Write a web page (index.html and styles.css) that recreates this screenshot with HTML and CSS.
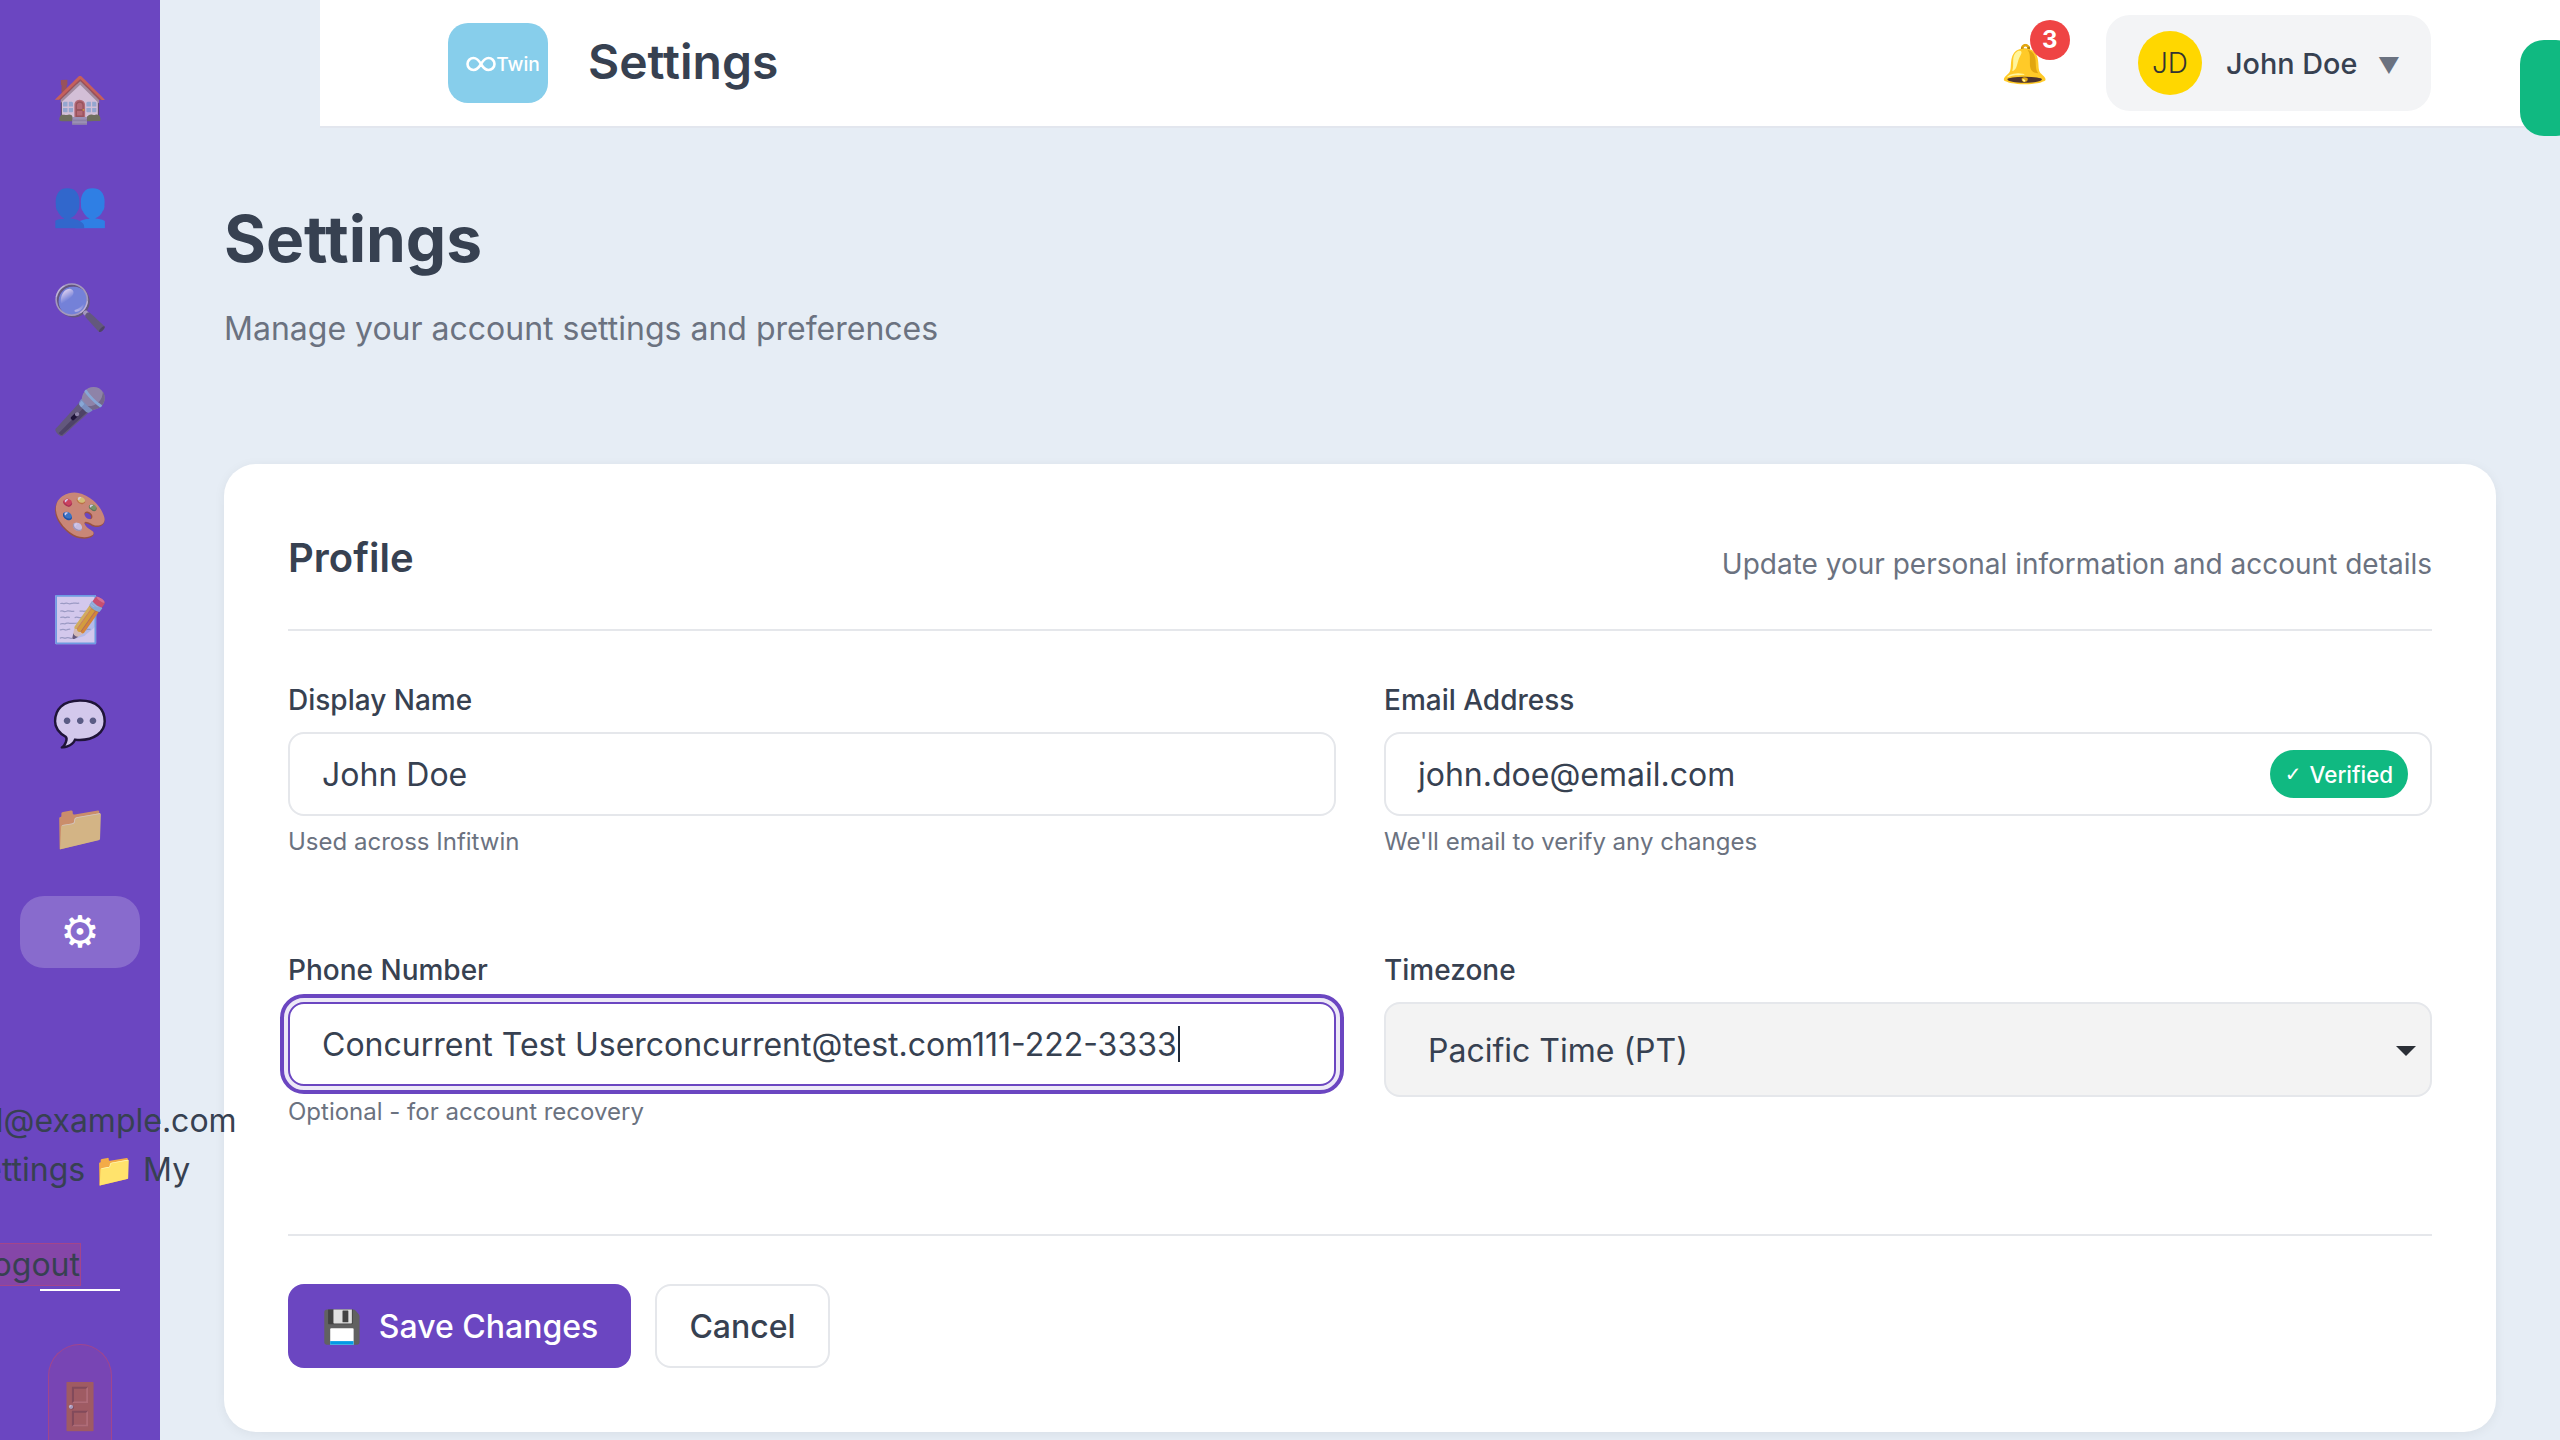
FILE: index.html
```html
<!DOCTYPE html>
<html lang="en">
<head>
<meta charset="utf-8">
<title>Settings</title>
<link rel="stylesheet" href="styles.css">
</head>
<body>
<div class="app">
  <aside class="sidebar">
    <nav class="nav">
      <a class="nav-item"><span class="nav-glyph">🏠</span></a>
      <a class="nav-item"><span class="nav-glyph">👥</span></a>
      <a class="nav-item"><span class="nav-glyph">🔍</span></a>
      <a class="nav-item"><span class="nav-glyph">🎤</span></a>
      <a class="nav-item"><span class="nav-glyph">🎨</span></a>
      <a class="nav-item"><span class="nav-glyph">📝</span></a>
      <a class="nav-item"><span class="nav-glyph">💬</span></a>
      <a class="nav-item"><span class="nav-glyph">📁</span></a>
      <a class="nav-item active"><span class="gear">⚙&#xFE0E;</span></a>
    </nav>
    <div class="stray">
      <div class="stray-line">email@example.com</div>
      <div class="stray-line stray-shift">⚙️ Settings 📁 My</div>
    </div>
    <div class="logout-row"><span class="logout-text">Logout</span></div>
    <div class="rule"></div>
    <div class="door"><span class="door-icon">🚪</span></div>
  </aside>
  <div class="column">
    <header class="topbar">
      <div class="logo">
        <svg class="inf" viewBox="0 0 30 16" width="30" height="16" aria-hidden="true"><path d="M15 8C12.5 3.8 10.5 2 7.5 2a6 6 0 0 0 0 12c3 0 5-1.800 7.500-6s4.500-6 7.500-6a6 6 0 0 1 0 12c-3 0-5-1.800-7.500-6z" fill="none" stroke="#fff" stroke-width="2.600"/></svg>
        <span class="logo-text">Twin</span>
      </div>
      <div class="top-title">Settings</div>
      <div class="top-right">
        <div class="bell"><span class="bell-glyph">🔔</span><span class="badge">3</span></div>
        <div class="user">
          <span class="avatar">JD</span>
          <span class="user-name">John Doe</span>
          <span class="caret">▼</span>
        </div>
      </div>
    </header>
    <main class="content">
      <h1 class="page-title">Settings</h1>
      <p class="page-sub">Manage your account settings and preferences</p>
      <section class="card">
        <div class="card-head">
          <h2 class="card-title">Profile</h2>
          <span class="card-note">Update your personal information and account details</span>
        </div>
        <div class="form-grid">
          <div class="field">
            <div class="label">Display Name</div>
            <div class="input">John Doe</div>
            <div class="help">Used across Infitwin</div>
          </div>
          <div class="field">
            <div class="label">Email Address</div>
            <div class="input input-email">john.doe@email.com<span class="verified"><span class="check">✓</span>Verified</span></div>
            <div class="help">We'll email to verify any changes</div>
          </div>
          <div class="field">
            <div class="label">Phone Number</div>
            <div class="input input-focus">Concurrent Test Userconcurrent@test.com111-222-3333<span class="text-caret"></span></div>
            <div class="help">Optional - for account recovery</div>
          </div>
          <div class="field">
            <div class="label">Timezone</div>
            <div class="select">Pacific Time (PT)<span class="select-arrow"></span></div>
          </div>
        </div>
        <div class="actions">
          <button class="btn btn-primary"><span class="btn-icon">💾</span>Save Changes</button>
          <button class="btn btn-ghost">Cancel</button>
        </div>
      </section>
    </main>
  </div>
</div>
<div class="toast-edge"></div>
</body>
</html>
```
FILE: styles.css
```css
* { box-sizing: border-box; }
html, body { margin: 0; height: 100%; }
body {
  width: 2560px; height: 1440px; overflow: hidden;
  background: #e6edf5; color: #374151;
  font-family: Inter, "Noto Color Emoji", "Noto Sans", sans-serif;
}
.app { display: flex; height: 1440px; }
.sidebar {
  width: 160px; flex: none; height: 1440px; background: #6b46c1;
  padding-top: 64px; position: relative; z-index: 5;
  display: flex; flex-direction: column; align-items: stretch;
}
.sidebar > * { flex: none; }
.nav { display: flex; flex-direction: column; gap: 32px; padding: 0 20px; }
.nav-item {
  height: 72px; display: flex; align-items: center; justify-content: center;
  font-size: 45px; line-height: 1; border-radius: 24px;
}
.nav-glyph { opacity: .7; padding-bottom: 3px; }
.nav-item.active { background: rgba(255,255,255,.2); }
.gear { color: #fff; font-size: 44px; font-family: "DejaVu Sans", sans-serif; }
.stray { margin-top: 128px; }
.stray-line {
  height: 49px; line-height: 49px; font-size: 32px; white-space: nowrap;
  display: flex; justify-content: center; color: #374151;
}
.stray-shift { padding-right: 56px; }
.logout-row { display: flex; justify-content: flex-end; width: 81px; margin-top: 49px; height: 43px; }
.logout-text {
  flex: none; font-size: 32px; line-height: 41px;
  background: rgba(239,68,68,.2); border: 1px solid rgba(239,68,68,.3);
}
.rule { width: 80px; height: 2px; background: #fff; margin: 3px 0 0 40px; }
.door {
  width: 64px; height: 100px; margin: 53px 0 0 48px;
  border: 1px solid rgba(239,68,68,.35); border-radius: 32px 32px 0 0;
  background: rgba(239,68,68,.1); display: flex; justify-content: center;
  padding-top: 38px; font-size: 45px; line-height: 1;
}
.door-icon { opacity: .7; }
.column { flex: 1; min-width: 0; display: flex; flex-direction: column; }
.topbar {
  height: 128px; margin-left: 160px; flex: none; background: #fff;
  border-bottom: 2px solid #e2e6ee; display: flex; align-items: center;
  padding: 0 129px 0 128px;
}
.logo {
  width: 100px; height: 80px; background: #87ceeb; border-radius: 20px; padding: 2px 0 0 10px;
  display: flex; align-items: center; justify-content: center; flex: none;
}
.inf { flex: none; }
.logo-text { color: #fff; font-size: 19.2px; font-weight: 500; }
.top-title { margin-left: 40px; font-size: 48px; font-weight: 600; color: #374151; padding-bottom: 4px; }
.top-right { margin-left: auto; display: flex; align-items: center; gap: 57px; }
.bell { position: relative; font-size: 38px; line-height: 1; }
.badge {
  position: absolute; left: 28px; top: -24px; width: 40px; height: 40px;
  border-radius: 50%; background: #ef4444; color: #fff; font-size: 24px;
  font-weight: 700; display: flex; align-items: center; justify-content: center;
}
.user {
  display: flex; align-items: center; height: 96px; width: 325px;
  padding: 0 31px 0 32px; background: #f3f4f6; border-radius: 24px;
}
.avatar {
  width: 64px; height: 64px; border-radius: 50%; background: #ffd700;
  color: #333; font-size: 28px; font-weight: 300; display: flex; align-items: center;
  justify-content: center; flex: none;
}
.user-name { margin-left: 24px; font-size: 28.8px; font-weight: 500; color: #374151; }
.caret { margin-left: auto; font-size: 22px; color: #6b7280; padding-top: 4px; }
.content { padding: 0 64px; }
.page-title { margin: 71px 0 0; font-size: 64px; line-height: 80px; font-weight: 700; color: #374151; }
.page-sub { margin: 26px 0 0; font-size: 32px; line-height: 48px; color: #6b7280; }
.card {
  margin-top: 111px; height: 968px; background: #fff; border-radius: 32px;
  padding: 64px; box-shadow: 0 2px 12px rgba(0,0,0,.06);
}
.card-head {
  display: flex; justify-content: space-between; align-items: flex-end;
  padding-bottom: 47px; height: 103px; border-bottom: 2px solid #e5e7eb;
}
.card-title { margin: 0; font-size: 40px; line-height: 48px; font-weight: 600; color: #374151; }
.card-note { font-size: 28px; line-height: 40px; color: #6b7280; margin-bottom: -2px; }
.form-grid { display: grid; grid-template-columns: 1fr 1fr; column-gap: 48px; margin-top: 49px; grid-auto-rows: 270px; }
.label { font-size: 28px; line-height: 40px; font-weight: 500; color: #374151; height: 52px; }
.input {
  height: 84px; border: 2px solid #e5e7eb; border-radius: 16px; background: #fff;
  padding: 0 32px; font-size: 32px; display: flex; align-items: center; color: #374151;
}
.input-email { position: relative; }
.verified {
  position: absolute; right: 22px; top: 16px; height: 48px; width: 138px;
  background: #10b981; color: #fff; border-radius: 24px; font-size: 22.4px;
  font-weight: 500; display: flex; align-items: center; justify-content: center;
}
.check { font-family: "DejaVu Sans", sans-serif; margin-right: 8px; font-size: 20px; }
.input-focus {
  border-color: #6b46c1; box-shadow: 0 0 0 4px #ede9f7;
  outline: 4px solid #6b46c1; outline-offset: 4px;
}
.text-caret { width: 2px; height: 36px; background: #1f2937; margin-left: 1px; }
.help { margin-top: 10px; font-size: 24px; line-height: 32px; color: #6b7280; }
.select {
  height: 95px; border: 2px solid #e5e7eb; border-radius: 16px; background: #f3f3f3;
  padding: 2px 14px 0 42px; font-size: 32px; display: flex; align-items: center;
  justify-content: space-between; color: #374151;
}
.select-arrow { width: 0; height: 0; border: 10px solid transparent; border-top-color: #2b2f36; border-bottom: 0; }
.actions { margin-top: 14px; padding-top: 48px; border-top: 2px solid #e5e7eb; display: flex; gap: 24px; }
.btn {
  height: 84px; border-radius: 16px; font-family: inherit; font-size: 32px; white-space: nowrap;
  font-weight: 500; display: flex; align-items: center; padding: 0 32px;
}
.btn-primary { background: #6b46c1; color: #fff; border: 0; width: 343px; padding-left: 34px; padding-right: 0; }
.btn-icon { margin-right: 17px; }
.btn-ghost { background: #fff; color: #374151; border: 2px solid #e5e7eb; width: 175px; justify-content: center; padding: 0; }
.toast-edge {
  position: fixed; left: 2520px; top: 40px; width: 60px; height: 96px;
  background: #10b981; border-radius: 24px; z-index: 6;
}
```
